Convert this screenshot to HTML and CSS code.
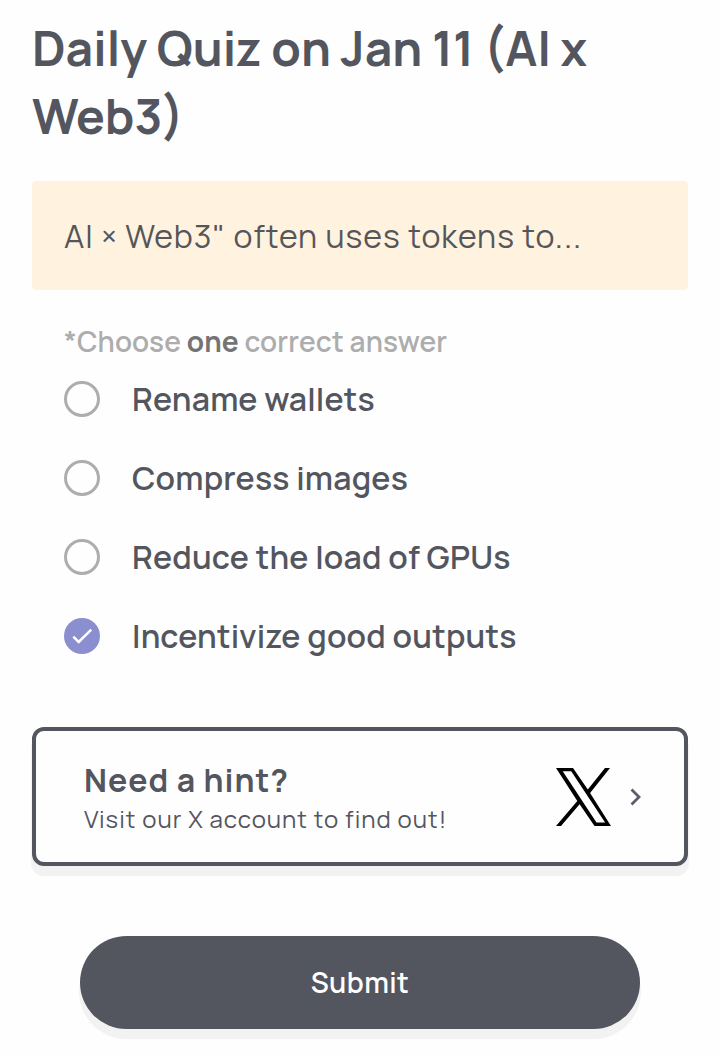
FILE: index.html
```html
<!DOCTYPE html>
<html lang="en">
<head>
  <meta charset="UTF-8" />
  <meta name="viewport" content="width=device-width, initial-scale=1.0" />
  <title>Daily Quiz</title>
  <link rel="stylesheet" href="styles.css">
</head>
<body>
  <main class="quiz">
    <h1>Daily Quiz on Jan 11 (AI x Web3)</h1>

    <div class="question">AI × Web3" often uses tokens to...</div>

    <form class="answers">
      <p class="note">*Choose <b>one</b> correct answer</p>
      <label class="option">
        <input type="radio" name="answer">
        <span class="radio"></span>
        <span>Rename wallets</span>
      </label>
      <label class="option">
        <input type="radio" name="answer">
        <span class="radio"></span>
        <span>Compress images</span>
      </label>
      <label class="option">
        <input type="radio" name="answer">
        <span class="radio"></span>
        <span>Reduce the load of GPUs</span>
      </label>
      <label class="option">
        <input type="radio" name="answer" checked>
        <span class="radio">
          <svg class="check" viewBox="0 0 35 35"><path d="M9 18 L14.3 23.3 L26.5 11.3" /></svg>
        </span>
        <span>Incentivize good outputs</span>
      </label>
    </form>

    <a class="hint" href="#">
      <div class="hint-text">
        <h2>Need a hint?</h2>
        <p>Visit our X account to find out!</p>
      </div>
      <svg class="x-logo" viewBox="0 0 55 58">
        <path fill-rule="evenodd" d="M0 0H17L31.8 21.6L49 0H54L34.1 24.9L55 58H38.5L23.6 36.3L5 58H0L21.3 33ZM6.7 3.2L40.5 54.6H49.1L15.2 3.2Z" />
      </svg>
      <svg class="chevron" viewBox="0 0 12 18"><path d="M1.5 1.5 L9 9 L1.5 16.5" /></svg>
    </a>

    <button class="submit" type="button">Submit</button>
  </main>
</body>
</html>
```
FILE: styles.css
```css
body {
  margin: 0;
  background-color: #fefefe;
  color: #53565f;
  font-family: Manrope, Inter, sans-serif;
}

.quiz {
  display: flex;
  flex-direction: column;
  padding: 14px 32px 16px;
}

h1 {
  margin: 0 0 31px;
  font-size: 48px;
  line-height: 68px;
  font-weight: 700;
}

.question {
  padding: 33px 32px 31px;
  border-radius: 4px;
  background-color: #fff2de;
  color: #55565a;
  font-size: 32px;
  line-height: 45px;
  font-weight: 400;
  letter-spacing: 1px;
  white-space: nowrap;
}

.answers {
  padding: 33px 32px 1px;
}

.note {
  margin: 0;
  font-size: 28px;
  line-height: 36px;
  font-weight: 600;
  letter-spacing: 0.15px;
  color: #adadad;
}

.note b {
  font-weight: 700;
  color: #747474;
}

.option {
  display: flex;
  align-items: center;
  gap: 32px;
  height: 79px;
  font-size: 32px;
  font-weight: 600;
  letter-spacing: 0.2px;
  white-space: nowrap;
  cursor: pointer;
}

.option input {
  display: none;
}

.radio {
  box-sizing: border-box;
  width: 36px;
  height: 36px;
  border: 3px solid #adadad;
  border-radius: 50%;
}

input:checked + .radio {
  border: none;
  background-color: #8b8fcf;
}

.check {
  display: block;
  fill: none;
  stroke: #fff;
  stroke-width: 2.4;
}

.hint {
  display: flex;
  align-items: center;
  box-sizing: border-box;
  height: 139px;
  margin-top: 51px;
  padding: 0 42px 0 48px;
  border: 4px solid #53565f;
  border-radius: 12px;
  box-shadow: 0 9px 1px 1px #f2f2f3;
  background-color: #fefefe;
  color: inherit;
  text-decoration: none;
}

.hint-text {
  flex: 1;
  padding-top: 2px;
  white-space: nowrap;
}

.hint h2 {
  margin: 0;
  font-size: 32px;
  line-height: 42px;
  font-weight: 700;
  letter-spacing: 1px;
}

.hint p {
  margin: 0;
  font-size: 24px;
  line-height: 36px;
  font-weight: 400;
  letter-spacing: 1px;
}

.x-logo {
  width: 55px;
  height: 58px;
  fill: #000;
}

.chevron {
  width: 12px;
  height: 18px;
  margin: 1px 0 0 19px;
  fill: none;
  stroke: #5b5e68;
  stroke-width: 2.8;
}

.submit {
  height: 93px;
  margin: 70px 48px 0;
  padding: 0 0 2px;
  border: none;
  border-radius: 47px;
  box-shadow: 0 9px 1px 1px #f2f2f2;
  background-color: #53565f;
  color: #fff;
  font-family: inherit;
  font-size: 28px;
  font-weight: 600;
  letter-spacing: 0.4px;
}
```
